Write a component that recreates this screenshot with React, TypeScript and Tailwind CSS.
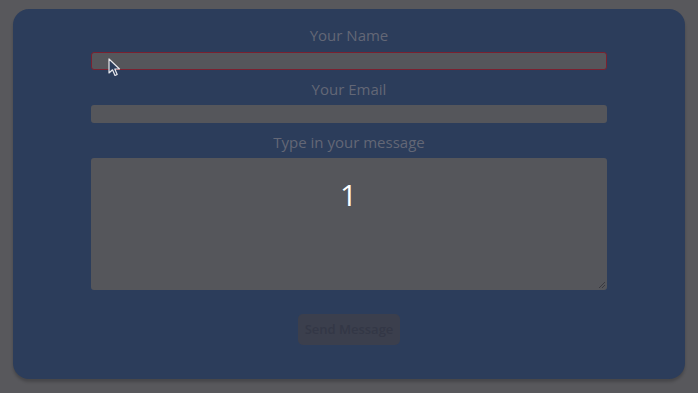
import React from "react";

function Cursor() {
  return (
    <svg width="14" height="20" viewBox="0 0 14 20" className="absolute left-[108px] top-[58px]">
      <path d="M1 1 L1 15 L4.5 11.8 L7 17.5 L9.2 16.5 L6.8 11 L11.5 11 Z" fill="#2c3d5b" stroke="#e8e8ec" strokeWidth="1.2" strokeLinejoin="round" />
    </svg>
  );
}

export default function App() {
  return (
    <div
      className="relative w-[698px] h-[393px] bg-[#58585c] pt-[9px] pl-[13px] overflow-hidden"
      style={{ fontFamily: '"Open Sans", "Liberation Sans", sans-serif' }}
    >
      <div className="w-[672px] h-[370px] rounded-[16px] bg-[#2c3d5b] shadow-[0_3px_3px_rgba(0,0,0,0.2)] pt-[16px] flex flex-col items-center">
        <label className="text-[15px] leading-[20px] text-[#636776]">Your Name</label>
        <div className="mt-[7px] w-[516px] h-[18px] rounded-[3px] bg-[#55565b] border border-[#7a2130]" />
        <label className="mt-[9px] text-[15px] leading-[20px] text-[#636776]">Your Email</label>
        <div className="mt-[6px] w-[516px] h-[18px] rounded-[3px] bg-[#55565b]" />
        <label className="mt-[9px] text-[15px] leading-[20px] text-[#636776]">Type in your message</label>
        <div className="relative mt-[6px] w-[516px] h-[132px] rounded-[3px] bg-[#55565b]">
          <svg width="8" height="8" viewBox="0 0 8 8" className="absolute right-[1px] bottom-[1px]">
            <path d="M7 1 L1 7 M7 4 L4 7" stroke="#3a3a40" strokeWidth="1" />
          </svg>
        </div>
        <button className="mt-[24px] w-[102px] h-[31px] rounded-[5px] bg-[#3b3f4d] text-[13px] text-[#333746] font-semibold">
          Send Message
        </button>
      </div>
      <div className="absolute left-[340px] top-[177px] text-[30px] leading-[36px] text-white">1</div>
      <Cursor />
    </div>
  );
}
